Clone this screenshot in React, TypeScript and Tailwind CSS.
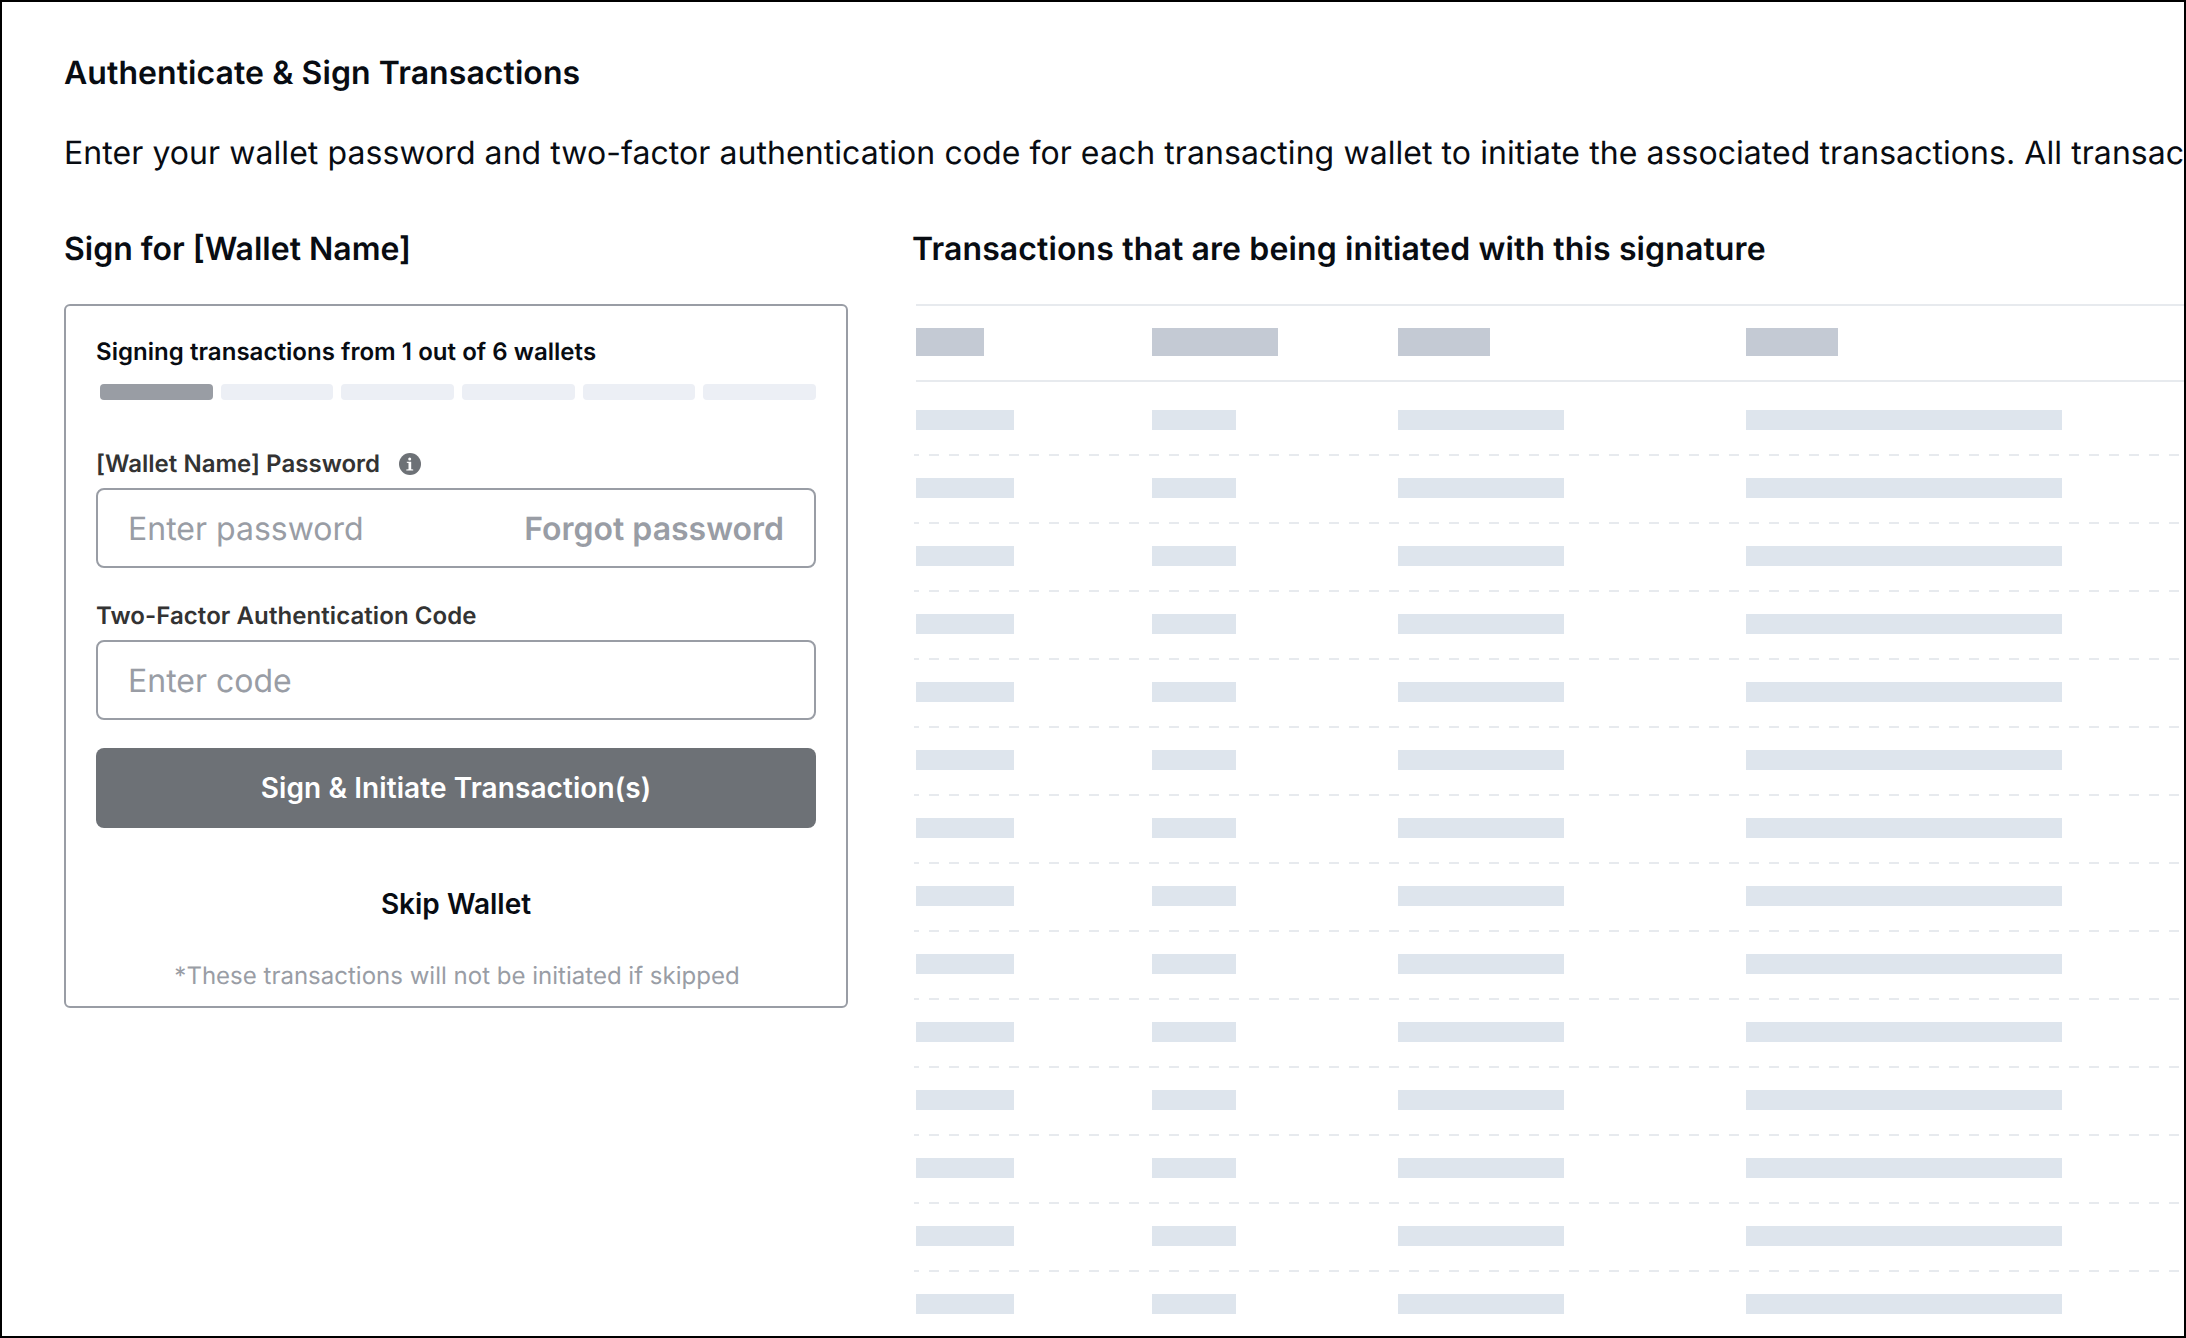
const columns = [
  { head: "w-[68px]", cell: "w-[98px]" },
  { head: "w-[126px]", cell: "w-[84px]" },
  { head: "w-[92px]", cell: "w-[166px]" },
  { head: "w-[92px]", cell: "w-[316px]" },
];

function InfoIcon() {
  return (
    <svg width="22" height="22" viewBox="0 0 22 22" aria-hidden="true">
      <circle cx="11" cy="11" r="11" fill="#6d7176" />
      <circle cx="10.7" cy="6" r="1.5" fill="#fff" />
      <path
        d="M7.8 8.8h4.4v7.4l2 .4v.9H7.3v-.9l2.2-.4v-6.1l-1.7-.3z"
        fill="#fff"
      />
    </svg>
  );
}

function Progress({ total, current }: { total: number; current: number }) {
  return (
    <div className="mt-[14px] ml-1 flex h-4 gap-2">
      {Array.from({ length: total }, (_, i) => (
        <div
          key={i}
          className={i < current ? "flex-1 rounded-[4px] bg-[#999da4]" : "flex-1 rounded-[4px] bg-[#eceff5]"}
        />
      ))}
    </div>
  );
}

function SignCard() {
  return (
    <div className="flex h-[704px] w-[784px] flex-col rounded-[6px] border-2 border-[#999da5] px-[30px] pt-7">
      <p className="text-2xl leading-9 font-semibold tracking-[0.045px]">
        Signing transactions from 1 out of 6 wallets
      </p>
      <Progress total={6} current={1} />

      <label className="mt-[46px] flex items-center text-2xl leading-9 font-semibold tracking-[0.03px] text-[#333]">
        <span>[Wallet Name] Password</span>
        <span className="ml-[19px]">
          <InfoIcon />
        </span>
      </label>
      <div className="mt-[6px] flex h-20 items-center justify-between rounded-lg border-2 border-[#999da5] px-[30px] pt-0.5 text-[32px] leading-[48px] text-[#999da5]">
        <span>Enter password</span>
        <span className="font-semibold">Forgot password</span>
      </div>

      <label className="mt-[30px] text-2xl leading-9 font-semibold tracking-[0.075px] text-[#333]">
        Two-Factor Authentication Code
      </label>
      <div className="mt-[6px] flex h-20 items-center rounded-lg border-2 border-[#999da5] px-[30px] pt-0.5 text-[32px] leading-[48px] text-[#999da5]">
        <span>Enter code</span>
      </div>

      <button className="mt-7 h-20 rounded-lg bg-[#6d7176] text-[28px] leading-[42px] font-semibold tracking-[0.08px] text-white">
        Sign &amp; Initiate Transaction(s)
      </button>
      <button className="mt-[55px] text-[28px] leading-[42px] font-semibold">Skip Wallet</button>
      <p className="mt-[33px] pl-0.5 text-center text-2xl leading-9 tracking-[0.01px] text-[#999da5]">
        *These transactions will not be initiated if skipped
      </p>
    </div>
  );
}

function TransactionsTable() {
  return (
    <div>
      <div className="ml-1 grid h-[78px] grid-cols-[236px_246px_348px_1fr] items-center border-y-2 border-[#e7eaee] pb-[2px]">
        {columns.map((c, i) => (
          <div key={i} className={`${c.head} h-7 bg-[#c4cad4]`} />
        ))}
      </div>
      <div className="ml-0.5 pt-1.5">
        {Array.from({ length: 14 }, (_, r) => (
          <div key={r}>
            <div className="ml-0.5 grid h-[66px] grid-cols-[236px_246px_348px_1fr] pt-[22px]">
              {columns.map((c, i) => (
                <div key={i} className={`${c.cell} h-5 bg-[#dee5ed]`} />
              ))}
            </div>
            <div className="h-0.5 bg-[repeating-linear-gradient(to_right,#e7eaee_0_5px,transparent_5px_15px,#e7eaee_15px_20px)]" />
          </div>
        ))}
      </div>
    </div>
  );
}

export default function App() {
  return (
    <main className="h-[1338px] w-[2186px] overflow-hidden border-2 border-black bg-white pt-[47px] pl-[62px] font-[Inter,sans-serif] text-[#080c12] [text-rendering:geometricPrecision]">
      <h1 className="text-[32px] leading-[48px] font-semibold tracking-[0.07px]">
        Authenticate &amp; Sign Transactions
      </h1>
      <p className="mt-8 text-[32px] leading-[48px] tracking-[0.065px] whitespace-nowrap">
        Enter your wallet password and two-factor authentication code for each transacting wallet to initiate the associated transactions. All transac
      </p>
      <div className="mt-12 flex gap-16">
        <section className="w-[784px] shrink-0">
          <h2 className="mb-[31px] text-[32px] leading-[48px] font-semibold">Sign for [Wallet Name]</h2>
          <SignCard />
        </section>
        <section className="min-w-0 flex-1">
          <h2 className="mb-[31px] text-[32px] leading-[48px] font-semibold tracking-[0.12px]">
            Transactions that are being initiated with this signature
          </h2>
          <TransactionsTable />
        </section>
      </div>
    </main>
  );
}
